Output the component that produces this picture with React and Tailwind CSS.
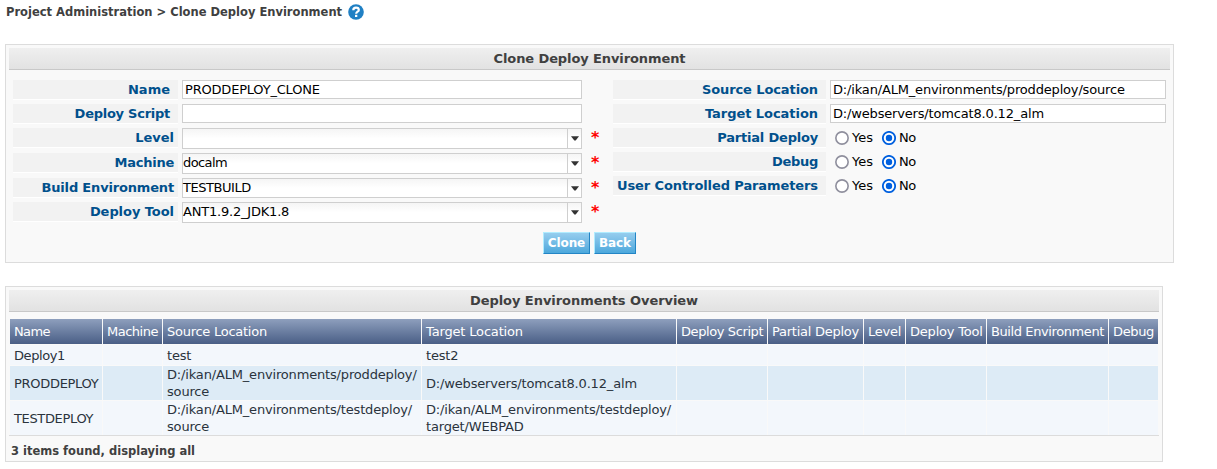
const leftFields = [
  { label: 'Name', value: 'PRODDEPLOY_CLONE', row: 'h-6', pad: 'pr-2', labelTrack: 'tracking-[0px]', track: 'tracking-[-0.2px]' },
  { label: 'Deploy Script', value: '', row: 'h-6', pad: 'pr-2', labelTrack: 'tracking-[-0.26px]', track: '' },
  { label: 'Level', value: '', combo: true, box: 'h-[21px]', row: 'h-[25px]', pad: 'pr-1', labelTrack: 'tracking-[0px]', track: '' },
  { label: 'Machine', value: 'docalm', combo: true, box: 'h-[21px]', row: 'h-[25px]', pad: 'pr-1', labelTrack: 'tracking-[-0.25px]', track: 'tracking-[-0.6px]' },
  { label: 'Build Environment', value: 'TESTBUILD', combo: true, box: 'h-5', row: 'h-6', pad: 'pr-1', labelTrack: 'tracking-[-0.17px]', track: 'tracking-[-0.45px]' },
  { label: 'Deploy Tool', value: 'ANT1.9.2_JDK1.8', combo: true, box: 'h-[21px]', row: 'h-6', pad: 'pr-1', labelTrack: 'tracking-[-0.06px]', track: 'tracking-[-0.2px]' },
];

const rightFields = [
  { label: 'Source Location', value: 'D:/ikan/ALM_environments/proddeploy/source', labelTrack: 'tracking-[-0.1px]' },
  { label: 'Target Location', value: 'D:/webservers/tomcat8.0.12_alm', labelTrack: 'tracking-[-0.05px]' },
  { label: 'Partial Deploy', radio: true, labelTrack: 'tracking-[-0.2px]' },
  { label: 'Debug', radio: true, labelTrack: 'tracking-[-0.3px]' },
  { label: 'User Controlled Parameters', radio: true, labelTrack: 'tracking-[-0.1px]' },
];

const columns = [
  { title: 'Name', track: 'tracking-[-0.6px]' },
  { title: 'Machine', track: 'tracking-[-0.5px]' },
  { title: 'Source Location', track: 'tracking-[-0.26px]' },
  { title: 'Target Location', track: 'tracking-[-0.16px]' },
  { title: 'Deploy Script', track: 'tracking-[-0.4px]' },
  { title: 'Partial Deploy', track: 'tracking-[-0.25px]' },
  { title: 'Level', track: 'tracking-[-0.25px]' },
  { title: 'Deploy Tool', track: 'tracking-[-0.2px]' },
  { title: 'Build Environment', track: 'tracking-[-0.4px]' },
  { title: 'Debug', track: 'tracking-[-0.35px]' },
];

const rows = [
  { name: 'Deploy1', nameTrack: 'tracking-[-0.4px]', source: ['test'], target: ['test2'], style: 'h-5 bg-[#f3f7fc]' },
  { name: 'PRODDEPLOY', nameTrack: 'tracking-[-0.3px]', source: ['D:/ikan/ALM_environments/proddeploy/', 'source'], target: ['D:/webservers/tomcat8.0.12_alm'], style: 'h-[34px] bg-[#ddebf6]' },
  { name: 'TESTDEPLOY', nameTrack: 'tracking-[-0.35px]', source: ['D:/ikan/ALM_environments/testdeploy/', 'source'], target: ['D:/ikan/ALM_environments/testdeploy/', 'target/WEBPAD'], style: 'h-[34px] bg-[#f3f7fc]' },
];

const gridCols = 'grid grid-cols-[92px_59px_258px_254px_90px_95px_41px_80px_121px_49px] gap-x-px';

function PanelTitle({ children, track }) {
  return (
    <h2 className={`h-[22px] border-b border-[#c8c8c8] bg-linear-to-b from-[#efefef] to-[#e2e2e2] text-center text-[13px] leading-[21px] font-bold text-[#404040] ${track}`}>
      {children}
    </h2>
  );
}

function Label({ children, className }) {
  return (
    <div className={`h-5 shrink-0 border-b border-white bg-[#f2f2f2] text-right text-[13px] leading-[19px] font-bold whitespace-nowrap text-[#00508c] ${className}`}>
      {children}
    </div>
  );
}

function TextBox({ value, className }) {
  return (
    <div className={`h-[19px] border border-[#cfcfcf] bg-white pl-0.5 text-[13px] leading-[17px] whitespace-nowrap text-black ${className}`}>
      {value}
    </div>
  );
}

function ComboBox({ value, height, track }) {
  return (
    <div className={`flex w-[400px] border border-[#cfcfcf] bg-linear-to-b from-[#f5f5f5] to-white to-50% text-[13px] leading-[17px] text-black ${height}`}>
      <div className={`flex-1 ${track}`}>{value}</div>
      <div className="flex w-3.5 items-center justify-center border-l border-[#cfcfcf]">
        <svg width="8" height="5" viewBox="0 0 8 5" className="block">
          <path d="M0 0.3H8L4.7 4.6H3.3Z" fill="#333" />
        </svg>
      </div>
    </div>
  );
}

function Radio({ label, checked, track }) {
  return (
    <div className="flex items-center gap-[3px]">
      <svg width="14" height="14" viewBox="0 0 14 14" className="block">
        <circle cx="7" cy="7" r="6.15" fill="#fff" stroke={checked ? '#0060df' : '#8f8f9d'} strokeWidth={checked ? 1.8 : 1.6} />
        {checked && <circle cx="7" cy="7" r="3.2" fill="#0060df" />}
      </svg>
      <span className={`text-[13px] leading-[19px] text-black ${track}`}>{label}</span>
    </div>
  );
}

function Button({ children, className }) {
  return (
    <button className={`h-[22px] border border-t-[#b0ecff] border-r-[#2385c5] border-b-[#2385c5] border-l-[#b0ecff] bg-linear-to-b from-[#96cdee] to-[#4ba8dc] pt-px text-center text-xs leading-[19px] font-bold text-white ${className}`}>
      {children}
    </button>
  );
}

function Lines({ items, track = 'tracking-[-0.17px]' }) {
  return (
    <div className={`self-center pl-1 leading-[17px] whitespace-nowrap ${track}`}>
      {items.map((line) => (
        <div key={line}>{line}</div>
      ))}
    </div>
  );
}

export default function App() {
  return (
    <div className="h-[469px] overflow-hidden bg-white pt-0.5 pl-[5px] font-['DejaVu_Sans',Verdana,sans-serif]">
      <div className="flex h-5 items-center gap-1.5 pl-px text-[11.5px] font-bold text-[#404040]">
        <span className="leading-5">Project Administration &gt; Clone Deploy Environment</span>
        <svg width="16" height="16" viewBox="0 0 16 16" className="block">
          <circle cx="8" cy="8" r="7.8" fill="#2080c4" />
          <path d="M5.3 6.2C5.3 4.4 6.4 3.6 8 3.6S10.8 4.5 10.8 5.9C10.8 7.7 8.2 7.7 8.2 9.7" fill="none" stroke="#fff" strokeWidth="2.2" />
          <rect x="7" y="10.8" width="2.3" height="2.2" fill="#fff" />
        </svg>
      </div>

      <section className="mt-[22px] h-[219px] w-[1169px] border border-[#dcdcdc] bg-[#f9f9f9] p-[3px]">
        <PanelTitle track="tracking-[-0.1px]">Clone Deploy Environment</PanelTitle>
        <div className="flex pt-2.5 pl-1">
          <div className="w-[600px]">
            {leftFields.map((f) => (
              <div key={f.label} className={`flex items-start ${f.row}`}>
                <Label className={`mr-1 w-[165px] ${f.pad} ${f.labelTrack}`}>{f.label}</Label>
                {f.combo ? (
                  <>
                    <ComboBox value={f.value} height={f.box} track={f.track} />
                    <span className="ml-[9px] text-base leading-5 font-bold text-[#ff0000]">*</span>
                  </>
                ) : (
                  <TextBox value={f.value} className={`w-[400px] ${f.track}`} />
                )}
              </div>
            ))}
          </div>
          <div>
            {rightFields.map((f) => (
              <div key={f.label} className="flex h-6 items-start">
                <Label className={`mr-1 w-[213px] pr-2 ${f.labelTrack}`}>{f.label}</Label>
                {f.radio ? (
                  <div className="flex gap-[9px] pl-[5px]">
                    <Radio label="Yes" track="tracking-[0px]" />
                    <Radio label="No" checked track="tracking-[-0.4px]" />
                  </div>
                ) : (
                  <TextBox value={f.value} className="w-[336px] tracking-[-0.17px]" />
                )}
              </div>
            ))}
          </div>
        </div>
        <div className="flex justify-center gap-1 pt-1.5">
          <Button className="w-[47px] tracking-[-0.1px]">Clone</Button>
          <Button className="w-[42px] tracking-[-0.1px]">Back</Button>
        </div>
      </section>

      <section className="mt-[23px] h-44 w-[1158px] border border-[#dcdcdc] bg-[#f9f9f9] p-[3px]">
        <PanelTitle track="tracking-[-0.05px]">Deploy Environments Overview</PanelTitle>
        <div className="flex flex-col gap-px border-b border-[#dcdcdc] pt-[7px] pl-px text-[13px] text-[#2a333d]">
          <div className={`${gridCols} h-[25px] leading-[25px] text-white`}>
            {columns.map((c) => (
              <div key={c.title} className={`bg-linear-to-b from-[#8e9fbd] to-[#4a5f86] pl-1 whitespace-nowrap ${c.track}`}>
                {c.title}
              </div>
            ))}
          </div>
          {rows.map((r) => (
            <div key={r.name} className={gridCols}>
              <div className={`flex ${r.style}`}><Lines items={[r.name]} track={r.nameTrack} /></div>
              <div className={r.style} />
              <div className={`flex ${r.style}`}><Lines items={r.source} /></div>
              <div className={`flex ${r.style}`}><Lines items={r.target} /></div>
              {columns.slice(4).map((c) => (
                <div key={c.title} className={r.style} />
              ))}
            </div>
          ))}
        </div>
        <p className="pt-[5px] pl-0.5 text-[11.5px] leading-5 font-bold text-[#404040]">3 items found, displaying all</p>
      </section>
    </div>
  );
}
